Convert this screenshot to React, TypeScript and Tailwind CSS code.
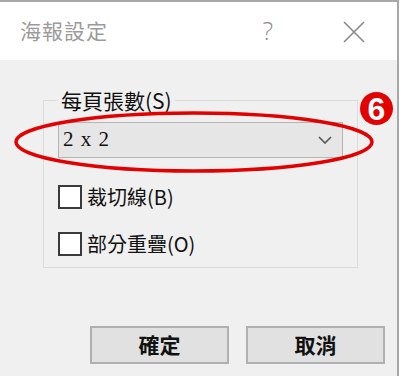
import React from 'react';

const cjk = { fontFamily: '"Noto Sans CJK TC", "Noto Sans CJK SC", sans-serif' };

const CheckRow = ({ label }: { label: string }) => (
  <label className="flex items-center gap-[5px] h-[24px]">
    <span className="w-[24px] h-[24px] border-2 border-[#3a3a3a] bg-white" />
    <span className="text-[20px] leading-none text-[#111]" style={cjk}>{label}</span>
  </label>
);

export default function App() {
  return (
    <div className="w-[402px] h-[384px] bg-white relative overflow-hidden">
      <div className="w-[399px] h-[376px] border-t-2 border-r-2 border-[#a8a8a8] flex flex-col">
        {/* title bar */}
        <div className="h-[58px] bg-white flex items-center pl-[20px] pr-[32px]">
          <span className="text-[21px] text-[#9b9b9b] tracking-[1px]" style={cjk}>海報設定</span>
          <span className="ml-auto mr-[70px] text-[25px] font-light text-[#8f8f8f]" style={{ fontFamily: '"Open Sans", sans-serif' }}>?</span>
          <svg width="22" height="22" viewBox="0 0 22 22" className="mt-[2px]">
            <path d="M1 1 L21 21 M21 1 L1 21" stroke="#8a8a8a" strokeWidth="1.6" fill="none" />
          </svg>
        </div>

        {/* body */}
        <div className="flex-1 bg-[#f0f0f0] flex flex-col pt-[28px]">
          <fieldset className="ml-[43px] w-[314px] h-[180px] border border-[#dcdcdc] px-[14px]">
            <legend className="px-[3px] text-[21px] leading-[24px] text-[#111]" style={cjk}>每頁張數(S)</legend>
            <div className="mt-[10px] w-[285px] h-[36px] bg-[#e6e6e6] border border-[#b4b4b4] flex items-center pl-[4px] pr-[10px]">
              <span className="text-[21px] text-[#111] tracking-[1px]" style={{ fontFamily: '"Liberation Serif", serif' }}>2 x 2</span>
              <svg width="14" height="8" viewBox="0 0 14 8" className="ml-auto">
                <path d="M1 1 L7 7 L13 1" stroke="#555" strokeWidth="1.6" fill="none" />
              </svg>
            </div>
            <div className="mt-[27px] flex flex-col gap-[23px]">
              <CheckRow label="裁切線(B)" />
              <CheckRow label="部分重疊(O)" />
            </div>
          </fieldset>

          <div className="mt-auto mb-[12px] flex justify-end gap-[17px] pr-[12px]">
            <button className="w-[139px] h-[38px] bg-[#e1e1e1] border-2 border-[#b0b0b0] text-[21px] font-semibold text-[#111]" style={cjk}>確定</button>
            <button className="w-[139px] h-[38px] bg-[#e1e1e1] border-2 border-[#b0b0b0] text-[21px] font-semibold text-[#111]" style={cjk}>取消</button>
          </div>
        </div>
      </div>

      {/* annotation overlay */}
      <svg className="absolute left-0 top-0 pointer-events-none" width="402" height="384">
        <ellipse cx="194" cy="142" rx="178" ry="29" stroke="#e30000" strokeWidth="3.5" fill="none" />
      </svg>
      <div className="absolute left-[360px] top-[92px] w-[33px] h-[33px] rounded-full bg-[#e30000] flex items-center justify-center">
        <span className="text-white text-[32px] font-bold leading-none mt-[1px]" style={{ fontFamily: '"Liberation Sans", sans-serif' }}>6</span>
      </div>
    </div>
  );
}
